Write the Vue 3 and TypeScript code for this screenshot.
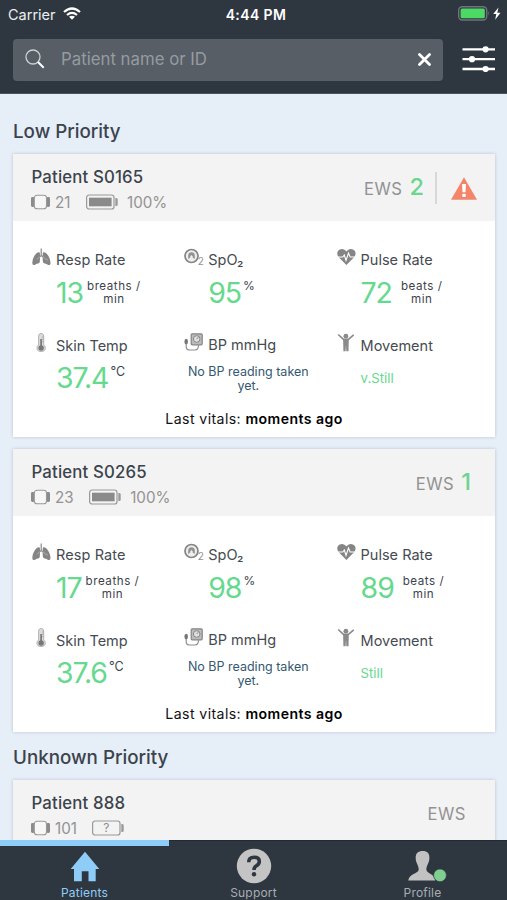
<script setup lang="ts">
interface Patient {
  name: string
  device: string
  battery: string | null
  score: string
  alert: boolean
  resp: string
  spo2: string
  pulse: string
  temp: string
  movement: string
}

interface Group {
  title: string
  patients: Patient[]
}

const groups: Group[] = [
  {
    title: 'Low Priority',
    patients: [
      { name: 'Patient S0165', device: '21', battery: '100%', score: '2', alert: true, resp: '13', spo2: '95', pulse: '72', temp: '37.4', movement: 'v.Still' },
      { name: 'Patient S0265', device: '23', battery: '100%', score: '1', alert: false, resp: '17', spo2: '98', pulse: '89', temp: '37.6', movement: 'Still' },
    ],
  },
  {
    title: 'Unknown Priority',
    patients: [
      { name: 'Patient 888', device: '101', battery: null, score: '', alert: false, resp: '', spo2: '', pulse: '', temp: '', movement: '' },
    ],
  },
]
</script>

<template>
  <div class="app">
    <header class="header">
      <div class="status">
        <div class="status-left">
          <span class="carrier">Carrier</span>
          <svg class="wifi" width="18" height="13" viewBox="0 0 18 13">
            <g fill="none" stroke="#fff" stroke-width="2.2">
              <path d="M1 5Q9 -2 17 5" />
              <path d="M4 8Q9 3.7 14 8" />
            </g>
            <path d="M6 9.8Q9 7.5 12 9.8L9 12.8Z" fill="#fff" />
          </svg>
        </div>
        <span class="clock">4:44 PM</span>
        <div class="status-right">
          <svg width="44" height="16" viewBox="0 0 44 16">
            <rect x="0.7" y="0.7" width="28" height="13.3" rx="3.5" fill="none" stroke="#6d747b" stroke-width="1.4" />
            <rect x="2.6" y="2.5" width="24.2" height="9.7" rx="1.5" fill="#4cd964" />
            <path d="M30.2 5Q32 7.3 30.2 9.7Z" fill="#6d747b" />
            <path d="M40.5 1.5L35.2 8.1H38.3L37.2 13.7L42.5 6.8H39.3Z" fill="#fff" />
          </svg>
        </div>
      </div>
      <div class="tools">
        <div class="search">
          <svg width="20" height="20" viewBox="0 0 20 20">
            <circle cx="8" cy="8" r="7" fill="none" stroke="#cdd0d3" stroke-width="1.3" />
            <path d="M13 13L18.7 18.7" fill="none" stroke="#fff" stroke-width="2" />
          </svg>
          <span class="placeholder">Patient name or ID</span>
          <svg class="clear" width="13" height="13" viewBox="0 0 13 13">
            <path d="M1.5 1.5L11.5 11.5M11.5 1.5L1.5 11.5" stroke="#fff" stroke-width="2.8" stroke-linecap="round" />
          </svg>
        </div>
        <svg class="filters" width="34" height="26" viewBox="0 0 34 26">
          <path d="M0.5 3.3H33M0.5 13.2H33M0.5 23H33" stroke="#fff" stroke-width="2.3" />
          <g fill="#fff"><circle cx="23.6" cy="3.3" r="3.1" /><circle cx="10" cy="13.2" r="3.1" /><circle cx="23.6" cy="23" r="3.1" /></g>
        </svg>
      </div>
    </header>

    <main class="content">
      <section v-for="group in groups" :key="group.title" class="group">
        <h2 class="group-title">{{ group.title }}</h2>
        <article v-for="p in group.patients" :key="p.name" class="card">
          <div class="card-head">
            <div class="identity">
              <h3 class="name">{{ p.name }}</h3>
              <div class="device">
                <svg width="19" height="16" viewBox="0 0 19 16">
                  <rect x="0" y="3" width="3.6" height="10" rx="1.4" fill="#8b8b8b" />
                  <rect x="15.4" y="3" width="3.6" height="10" rx="1.4" fill="#8b8b8b" />
                  <rect x="3.3" y="1.2" width="12.2" height="13.6" rx="2.8" fill="#f6f6f6" stroke="#999" stroke-width="1.1" />
                </svg>
                <span class="device-id">{{ p.device }}</span>
                <svg class="battery" width="32" height="16" viewBox="0 0 32 16">
                  <rect x="0.6" y="1" width="27.4" height="14" rx="2.6" fill="none" stroke="#999" stroke-width="1.2" />
                  <rect v-if="p.battery" x="3" y="3.7" width="22.6" height="8.6" fill="#8a8a8a" />
                  <path d="M29.3 4H30.3Q31.7 4 31.7 5.5V10.5Q31.7 12 30.3 12H29.3Z" fill="#999" />
                  <text v-if="!p.battery" class="unknown" x="14.3" y="12" text-anchor="middle">?</text>
                </svg>
                <span v-if="p.battery" class="charge">{{ p.battery }}</span>
              </div>
            </div>
            <div class="ews" :class="{ alerting: p.alert, empty: !p.score }">
              <span class="ews-label">EWS</span>
              <span v-if="p.score" class="score">{{ p.score }}</span>
              <div v-if="p.alert" class="alert">
                <svg width="26" height="23" viewBox="0 0 26 23">
                  <path d="M13 0.2L26 22.7H0Z" fill="#f4846a" />
                  <path d="M11 7H15L14.5 15.3H11.5Z" fill="#fff" />
                  <rect x="11.2" y="16.7" width="3.6" height="3.3" rx="1" fill="#fff" />
                </svg>
              </div>
            </div>
          </div>

          <div v-if="p.resp" class="card-body">
            <div class="vitals">
              <div class="vital">
                <svg class="icon" width="19" height="18" viewBox="0 0 19 18">
                  <path d="M9.2 0.5V8M9.3 7.5L5.8 10.5M9.3 7.5L13 10.5" fill="none" stroke="#8a8a8a" stroke-width="1.2" />
                  <path d="M7.5 4.3C5 3.2 1 8.5 0.4 13.8C0.1 17.2 1.2 17.6 3.5 16.4C5.2 15.3 7.3 15.8 7.7 14.3C8 12.5 8.4 5.2 7.5 4.3Z" fill="#858585" />
                  <path d="M11.2 4.3C13.7 3.2 17.8 8.5 18.4 13.8C18.8 17.2 17.5 17.6 15.3 16.4C13.6 15.3 11.4 15.8 11 14.3C10.7 12.5 10.3 5.2 11.2 4.3Z" fill="#858585" />
                  <path d="M8 8.5L5 11.5M10.8 8.5L13.5 11L15.8 12" fill="none" stroke="#bbb" stroke-width="0.8" />
                </svg>
                <span class="label resp-label">Resp Rate</span>
                <div class="reading"><span class="number">{{ p.resp }}</span><span class="unit"><span>breaths /</span><span>min</span></span></div>
              </div>
              <div class="vital">
                <svg class="icon" width="20" height="19" viewBox="0 0 20 19">
                  <circle cx="7.5" cy="8" r="6.5" fill="#eee" stroke="#858585" stroke-width="1.7" />
                  <path d="M4.2 11V7.5Q4.4 4.2 7.5 4.2Q10.6 4.2 10.8 7.5V11L8.7 9.5V8.2L7.5 7L6.3 8.2V9.5Z" fill="#929292" />
                  <text class="oxygen" x="13.8" y="17">2</text>
                </svg>
                <span class="label">SpO₂</span>
                <div class="reading"><span class="number">{{ p.spo2 }}</span><span class="unit percent">%</span></div>
              </div>
              <div class="vital">
                <svg class="icon" width="19" height="18" viewBox="0 0 19 18">
                  <path d="M9.4 17L1.5 9C-0.6 6.4 0.1 2.6 2.8 1.5C5.2 0.3 7.9 1.3 9.4 3.5C11 1.3 13.6 0.3 16 1.5C18.8 2.6 19.4 6.4 17.3 9Z" fill="#858585" />
                  <path d="M0 9H5.8L7.3 7L9 12.5L11.5 5L13.1 9H18.8" fill="none" stroke="#fff" stroke-width="1.1" />
                </svg>
                <span class="label">Pulse Rate</span>
                <div class="reading"><span class="number">{{ p.pulse }}</span><span class="unit beats"><span>beats /</span><span>min</span></span></div>
              </div>
              <div class="vital">
                <svg class="icon" width="19" height="19" viewBox="0 0 19 19">
                  <path d="M6.6 12V3.1Q6.6 0.5 9.1 0.5Q11.7 0.5 11.7 3.1V12Q13.3 13.1 13.3 15Q13.3 18.5 9.1 18.5Q5 18.5 5 15Q5 13.1 6.6 12Z" fill="#ddd" stroke="#aaa" stroke-width="0.9" />
                  <path d="M9.1 6V15" stroke="#777" stroke-width="1.7" />
                  <circle cx="9.1" cy="15" r="2.7" fill="#777" />
                  <path d="M9.8 4H11.5M9.8 6.3H11.5M9.8 8.6H11.5" stroke="#999" stroke-width="0.7" />
                </svg>
                <span class="label low">Skin Temp</span>
                <div class="reading"><span class="number">{{ p.temp }}</span><span class="unit symbol">°C</span></div>
              </div>
              <div class="vital">
                <svg class="icon" width="20" height="19" viewBox="0 0 20 19">
                  <rect x="7.2" y="0.8" width="11" height="11" rx="1" fill="#bbb" stroke="#858585" stroke-width="1.2" />
                  <circle cx="12.7" cy="6" r="3.3" fill="#e0e0e0" stroke="#888" stroke-width="1" />
                  <path d="M12.7 6L14.2 4.3" stroke="#777" stroke-width="0.9" />
                  <path d="M2.2 10V13.7Q2.2 17 5.8 17H11Q14.5 17 14.5 12" fill="none" stroke="#909090" stroke-width="1.2" />
                  <ellipse cx="2.2" cy="8.5" rx="1.8" ry="2.8" fill="#777" />
                </svg>
                <span class="label bp">BP mmHg</span>
                <p class="no-reading">No BP reading taken<br />yet.</p>
              </div>
              <div class="vital">
                <svg class="icon" width="19" height="19" viewBox="0 0 19 19">
                  <circle cx="8.9" cy="3.2" r="2.4" fill="#8a8a8a" />
                  <path d="M1.2 1.5L6.5 6.4H11.4L16.7 1.8" fill="none" stroke="#8a8a8a" stroke-width="1.6" />
                  <path d="M6.1 6H11.8L11.5 18.3H9.3L9 12L8.6 18.3H6.4Z" fill="#8a8a8a" />
                </svg>
                <span class="label low">Movement</span>
                <p class="movement">{{ p.movement }}</p>
              </div>
            </div>
            <p class="last">Last vitals: <strong>moments ago</strong></p>
          </div>
        </article>
      </section>
    </main>

    <nav class="tabs">
      <div class="tab active">
        <svg width="30" height="31" viewBox="0 0 30 31">
          <path d="M15 0.8L29.3 18H25.7V30.3H18.5V20.3H11.8V30.3H4V18H0.7Z" fill="#8ecdf7" />
        </svg>
        <span>Patients</span>
      </div>
      <div class="tab support">
        <svg width="36" height="36" viewBox="0 0 36 36">
          <circle cx="18" cy="18" r="17.2" fill="#c4c4c4" />
          <path d="M12.7 14.3Q12.7 9.3 18.1 9.3Q23.3 9.3 23.3 13.4Q23.3 16 20.4 17.8Q18 19.2 18 22" fill="none" stroke="#2e3740" stroke-width="3.6" />
          <circle cx="18" cy="26.3" r="2.2" fill="#2e3740" />
        </svg>
        <span>Support</span>
      </div>
      <div class="tab">
        <svg width="50" height="32" viewBox="0 0 50 32">
          <path d="M24.7 1C29.2 1 31.7 3.2 31.4 8.5C31.1 13.5 28.4 15.2 28.4 19.4C28.4 23.6 36.7 23.4 37.3 30.5H10.3C10.9 23.4 20.7 23.6 20.7 19.4C20.7 15.2 18 13.5 17.7 8.5C17.4 3.2 20.2 1 24.7 1Z" fill="#c2c2c2" />
          <circle cx="42" cy="25.3" r="6.4" fill="#7fcf91" stroke="#2e3740" stroke-width="0.7" />
        </svg>
        <span>Profile</span>
      </div>
    </nav>
  </div>
</template>

<style>
body {
  margin: 0;
  overflow: hidden;
}
</style>

<style scoped>
.app {
  width: 507px;
  height: 900px;
  display: flex;
  flex-direction: column;
  overflow: hidden;
  background: #e6eef8;
  color: #3b434c;
  font-family: Inter, 'Liberation Sans', sans-serif;
}
h2, h3, p { margin: 0; }
svg { display: block; flex: none; }
.header {
  flex: none;
  height: 94px;
  box-sizing: border-box;
  border-bottom: 1px solid #4a545d;
  background: #2e3740;
}
.status {
  height: 28px;
  padding: 0 5px 0 8px;
  display: grid;
  grid-template-columns: 1fr auto 1fr;
  align-items: center;
  color: #fff;
}
.status-left { display: flex; align-items: center; gap: 7px; }
.wifi { margin-bottom: 2px; }
.carrier { font-size: 14.5px; color: #eceef0; }
.clock { margin-left: 2px; font-size: 14px; font-weight: 600; letter-spacing: 0.4px; }
.status-right { display: flex; justify-content: flex-end; }
.tools { display: flex; align-items: flex-start; gap: 19px; padding: 11px 11px 0 13px; }
.filters { margin-top: 7px; }
.search {
  flex: 1;
  height: 42px;
  box-sizing: border-box;
  padding: 0 12px 2px 12px;
  display: flex;
  align-items: center;
  background: #575e66;
  border-radius: 4px;
}
.placeholder { margin-left: 16px; font-size: 16.8px; color: #969ba1; }
.clear { margin-left: auto; margin-top: 1px; }
.content { flex: 1; min-height: 0; overflow: hidden; padding: 21px 12px 0 13px; }
.group-title { height: 39px; line-height: 34px; font-size: 18.8px; font-weight: 500; }
.card {
  margin-bottom: 12px;
  background: #fff;
  box-shadow: 0 0 3px rgba(50, 65, 85, 0.25);
}
.card:last-child { margin-bottom: 9px; }
.card-head {
  height: 67px;
  box-sizing: border-box;
  padding: 12px 18px 0 18px;
  display: flex;
  justify-content: space-between;
  background: #f3f3f3;
}
.name { font-size: 16.8px; line-height: 22px; font-weight: 550; padding-left: 0.5px; letter-spacing: 0.15px; }
.device { display: flex; align-items: center; height: 20px; margin-top: 4px; color: #929292; font-size: 15.2px; }
.device-id { margin-left: 5px; }
.battery { margin-left: 15.5px; }
.charge { margin-left: 9px; }
.unknown { font-size: 12px; fill: #8c8c8c; }
.ews { height: 44px; display: flex; align-items: center; color: #929292; margin-right: 6px; }
.ews.alerting { margin-right: 0; }
.ews.empty { height: 43px; margin-right: 11px; }
.ews-label { font-size: 16.6px; letter-spacing: 0.5px; }
.ews:not(.empty) .ews-label { padding-top: 2px; }
.score { margin-left: 7px; font-size: 23.5px; font-weight: 500; color: #6bd68f; line-height: 32px; padding-bottom: 2px; }
.alert { margin-left: 11px; padding-left: 14px; height: 32px; border-left: 2px solid #d8d8d8; display: flex; align-items: center; }
.card-body { height: 216px; box-sizing: border-box; padding: 27px 0 0 19px; }
.vitals { display: grid; grid-template-columns: repeat(3, 152.3px); grid-auto-rows: 85px; }
.vital { display: grid; grid-template-columns: 24px 1fr; grid-template-rows: 24px 48px; align-content: start; }
.label { font-size: 14.5px; line-height: 24px; color: #454b52; }
.resp-label { letter-spacing: 0.1px; }
.label.low { line-height: 26px; }
.label.bp { line-height: 23px; }
.oxygen { font-size: 10px; fill: #929292; }
.reading { grid-column: 2; display: flex; gap: 4px; padding-top: 4px; }
.number { font-size: 28.5px; line-height: 34px; color: #65d98d; letter-spacing: -1.1px; }
.unit { display: flex; flex-direction: column; padding-top: 4px; font-size: 11.6px; line-height: 12.5px; letter-spacing: 0.55px; text-align: center; }
.beats { margin-left: 5px; }
.symbol { padding-top: 5px; font-size: 12.5px; letter-spacing: 0; margin-left: -2px; }
.percent { margin-left: -2px; font-size: 12px; letter-spacing: 0; }
.no-reading { grid-column: 1 / 3; width: 128px; padding-top: 8px; font-size: 12.5px; line-height: 13.5px; text-align: center; color: #34586f; white-space: nowrap; }
.movement { grid-column: 2; padding-top: 12px; font-size: 13.2px; line-height: 18px; color: #65d98d; }
.last { margin: -8px 0 0 -19px; text-align: center; color: #111; font-size: 14.1px; line-height: 18px; letter-spacing: 0.42px; }
.last strong { font-weight: 600; color: #000; }
.tabs { flex: none; height: 60px; display: grid; grid-template-columns: repeat(3, 1fr); background: #2e3740; }
.tab { display: flex; flex-direction: column; align-items: center; justify-content: flex-end; gap: 4px; color: #a9adb2; font-size: 12px; line-height: 14px; letter-spacing: 0.2px; border-top: 1px solid #222b34; box-sizing: border-box; }
.tab.active { color: #8ecdf7; border-top: 6px solid #8ecdf7; }
.tab.support { gap: 2px; }
</style>
